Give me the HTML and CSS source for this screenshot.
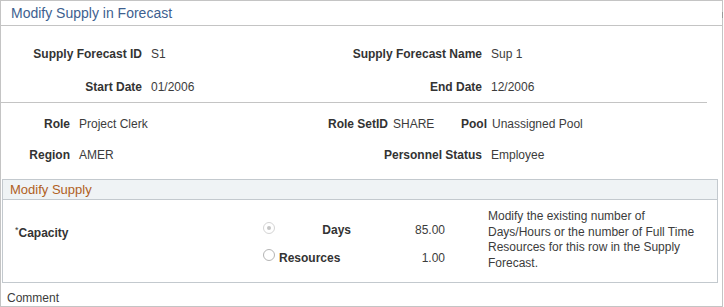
FILE: index.html
```html
<!DOCTYPE html>
<html lang="en">
<head>
	<meta charset="UTF-8">
	<title>Modify Supply in Forecast</title>
	<link rel="stylesheet" href="styles.css">
</head>
<body>
	<div class="page">
		<div class="titlebar">Modify Supply in Forecast</div>

		<div class="row r1">
			<span class="lbl w141">Supply Forecast ID</span>
			<span class="val w190">S1</span>
			<span class="lbl w150">Supply Forecast Name</span>
			<span class="val">Sup 1</span>
		</div>
		<div class="row r2">
			<span class="lbl w141">Start Date</span>
			<span class="val w190">01/2006</span>
			<span class="lbl w150">End Date</span>
			<span class="val">12/2006</span>
		</div>

		<div class="sep"></div>

		<div class="row r3">
			<span class="lbl w69">Role</span>
			<span class="val w220">Project Clerk</span>
			<span class="lbl w98">Role SetID</span>
			<span class="val tight w60">SHARE</span>
			<span class="lbl w39">Pool</span>
			<span class="val tight">Unassigned Pool</span>
		</div>
		<div class="row r4">
			<span class="lbl w69">Region</span>
			<span class="val w220">AMER</span>
			<span class="lbl w192">Personnel Status</span>
			<span class="val">Employee</span>
		</div>

		<div class="group">
			<div class="group-head">Modify Supply</div>
			<div class="group-body">
				<div class="opts">
					<span class="cap"><span class="req">*</span>Capacity</span>
					<span class="radio checked"></span>
					<span class="opt right">Days</span>
					<span class="num">85.00</span>

					<span></span>
					<span class="radio"></span>
					<span class="opt">Resources</span>
					<span class="num">1.00</span>
				</div>
				<div class="desc">Modify the existing number of<br>Days/Hours or the number of Full Time<br>Resources for this row in the Supply<br>Forecast.</div>
			</div>
		</div>

		<div class="comment">Comment</div>
	</div>
</body>
</html>
```

FILE: styles.css
```css
body {
	margin: 0;
	font-family: "Liberation Sans", Arial, sans-serif;
	font-size: 12px;
	color: #3c3c3c;
	background: #fff;
}

.page {
	width: 721px;
	height: 305px;
	border: 1px solid #c4c4c4;
}

.titlebar {
	position: relative;
	height: 24px;
	line-height: 24px;
	padding-left: 10px;
	font-size: 14px;
	color: #3e5f8f;
	border-bottom: 1px solid #c4c4c4;
}
.titlebar::after {
	content: "";
	position: absolute;
	right: -1px;
	top: 11px;
	width: 1px;
	height: 6px;
	background: #9a9a9a;
}

.row {
	display: flex;
	height: 20px;
	line-height: 20px;
	white-space: nowrap;
}
.r1 { margin-top: 18px; }
.r2 { margin-top: 13px; }
.r3 { margin-top: 11px; }
.r4 { margin-top: 11px; }

.lbl {
	font-weight: bold;
	text-align: right;
	color: #333;
}
.val {
	padding-left: 9px;
	box-sizing: border-box;
}
.val.tight { padding-left: 5px; }

.w39 { width: 39px; }
.w60 { width: 60px; }
.w69 { width: 69px; }
.w98 { width: 98px; }
.w141 { width: 141px; }
.w150 { width: 150px; }
.w190 { width: 190px; }
.w192 { width: 192px; }
.w220 { width: 220px; }

.sep {
	margin: 5px 0 0 -1px;
	width: 707px;
	height: 1px;
	background: #c4c4c4;
}

.group {
	margin: 14px 0 0 1px;
	width: 714px;
	border: 1px solid #c3c9ce;
}
.group-head {
	height: 19px;
	line-height: 19px;
	padding-left: 7px;
	font-size: 13px;
	color: #b0601e;
	background: #eff3f5;
	border-bottom: 1px solid #c3c9ce;
}
.group-body {
	display: flex;
	height: 82px;
	padding-top: 9px;
	box-sizing: border-box;
}

.opts {
	display: grid;
	grid-template-columns: 260px 14px 74px 94px;
	grid-auto-rows: 20px;
	row-gap: 8px;
	margin-top: 11px;
	line-height: 20px;
}
.cap {
	padding-left: 12px;
	font-weight: bold;
	color: #333;
}
.req {
	font-size: 9px;
	vertical-align: 4px;
	font-weight: normal;
}
.radio {
	width: 12px;
	height: 12px;
	margin-top: 1px;
	border: 1px solid #b4b4b4;
	border-radius: 50%;
	background: #fff;
	box-sizing: border-box;
	position: relative;
}
.radio.checked {
	border-color: #d4d4d4;
	margin-top: 2px;
}
.radio.checked::after {
	content: "";
	position: absolute;
	left: 3px;
	top: 3px;
	width: 4px;
	height: 4px;
	border-radius: 50%;
	background: #c4c4c4;
}
.opt {
	font-weight: bold;
	color: #333;
	padding-left: 2px;
}
.opt.right {
	text-align: right;
	padding-left: 0;
}
.num {
	text-align: right;
}

.desc {
	margin-left: 43px;
	line-height: 15.5px;
	white-space: nowrap;
}

.comment {
	padding: 8px 0 0 6px;
	line-height: 14px;
}
```
